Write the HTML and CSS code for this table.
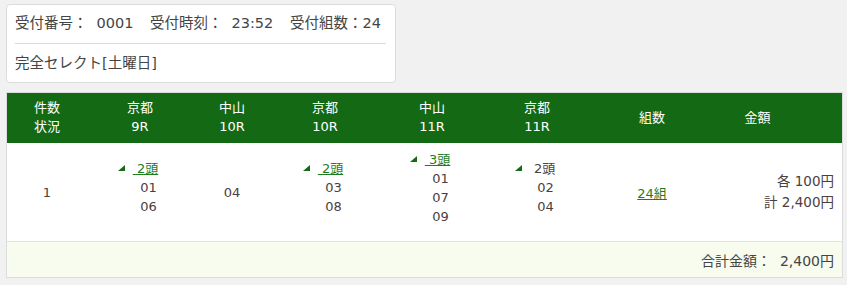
FILE: index.html
```html
<!DOCTYPE html>
<html lang="ja">
<head>
<meta charset="utf-8">
<title>受付</title>
<link rel="stylesheet" href="styles.css">
</head>
<body>
<div class="card">
  <div class="info">
    <span class="item">受付番号：<span class="val">0001</span></span>
    <span class="item">受付時刻：<span class="val">23:52</span></span>
    <span class="item">受付組数：24</span>
  </div>
  <div class="type">完全セレクト[土曜日]</div>
</div>

<table class="bets">
  <colgroup>
    <col class="c1"><col class="c2"><col class="c3"><col class="c4">
    <col class="c5"><col class="c6"><col class="c7"><col class="c8">
  </colgroup>
  <thead>
    <tr>
      <th>件数<br>状況</th>
      <th>京都<br>9R</th>
      <th>中山<br>10R</th>
      <th>京都<br>10R</th>
      <th>中山<br>11R</th>
      <th>京都<br>11R</th>
      <th>組数</th>
      <th class="amt-h">金額</th>
    </tr>
  </thead>
  <tbody>
    <tr class="row">
      <td>1</td>
      <td>
        <div class="sel">
          <div class="head"><span class="tri"></span><a href="#" class="lnk">&nbsp;2頭</a></div>
          <div class="num">01</div>
          <div class="num">06</div>
        </div>
      </td>
      <td>04</td>
      <td>
        <div class="sel">
          <div class="head"><span class="tri"></span><a href="#" class="lnk">&nbsp;2頭</a></div>
          <div class="num">03</div>
          <div class="num">08</div>
        </div>
      </td>
      <td>
        <div class="sel">
          <div class="head"><span class="tri"></span><a href="#" class="lnk">&nbsp;3頭</a></div>
          <div class="num">01</div>
          <div class="num">07</div>
          <div class="num">09</div>
        </div>
      </td>
      <td>
        <div class="sel">
          <div class="head"><span class="tri"></span><span class="plain">&nbsp;2頭</span></div>
          <div class="num">02</div>
          <div class="num">04</div>
        </div>
      </td>
      <td><a href="#" class="lnk">24組</a></td>
      <td class="amt">
        <div class="amt-line">各 100円</div>
        <div class="amt-line">計 2,400円</div>
      </td>
    </tr>
    <tr class="total">
      <td colspan="8">合計金額：<span class="val">2,400円</span></td>
    </tr>
  </tbody>
</table>
</body>
</html>
```

FILE: styles.css
```css
html, body {
  margin: 0;
  padding: 0;
}
body {
  background: #f1f1f1;
  padding: 4px 0 0 6px;
  font-family: "DejaVu Sans", "Noto Sans CJK JP", sans-serif;
  color: #444;
}
.card {
  box-sizing: border-box;
  width: 390px;
  height: 79px;
  background: #fff;
  border: 1px solid #dcdcdc;
  border-radius: 4px;
  padding: 9px 9px 0 8px;
  font-size: 14.5px;
}
.info {
  line-height: 18px;
  height: 18px;
  padding-bottom: 11px;
  border-bottom: 1px solid #dadada;
  white-space: nowrap;
}
.item {
  margin-right: 12px;
}
.item:last-child {
  margin-right: 0;
}
.val {
  margin-left: 9px;
}
.type {
  margin-top: 10px;
  line-height: 18px;
}

.bets {
  margin-top: 9px;
  width: 837px;
  border-collapse: separate;
  border-spacing: 0;
  border: 1px solid #dcdcdc;
  table-layout: fixed;
  font-size: 13px;
  background: #fff;
}
.c1 { width: 80px; }
.c2 { width: 106px; }
.c3 { width: 78px; }
.c4 { width: 108px; }
.c5 { width: 106px; }
.c6 { width: 104px; }
.c7 { width: 126px; }
.c8 { width: 127px; }

.bets th {
  background: #146a14;
  color: #fff;
  font-weight: normal;
  line-height: 19px;
  padding: 5px 0 7px;
  height: 38px;
  text-align: center;
  vertical-align: middle;
}
.bets th.amt-h {
  padding-right: 42px;
}
.row td {
  height: 98px;
  padding: 0;
  text-align: center;
  vertical-align: middle;
  border-bottom: 1px solid #e2e2e2;
  color: #4a4040;
}
.sel {
  line-height: 19px;
  padding-bottom: 9px;
}
.head {
  padding-right: 4px;
}
.tri {
  display: inline-block;
  width: 0;
  height: 0;
  border-left: 7px solid transparent;
  border-bottom: 6px solid #156a15;
  margin-right: 8px;
  margin-bottom: 2px;
}
.lnk {
  color: #1e7d1e;
  text-decoration: underline;
}
.plain {
  color: #444;
}
.num {
  padding-left: 17px;
}
.row td.amt {
  text-align: right;
  padding-right: 8px;
  line-height: 21px;
  font-size: 13.5px;
}
.total td {
  background: #f7fcef;
  height: 35px;
  padding: 0 8px 0 0;
  text-align: right;
  vertical-align: middle;
  color: #444;
  font-size: 14px;
}
```
